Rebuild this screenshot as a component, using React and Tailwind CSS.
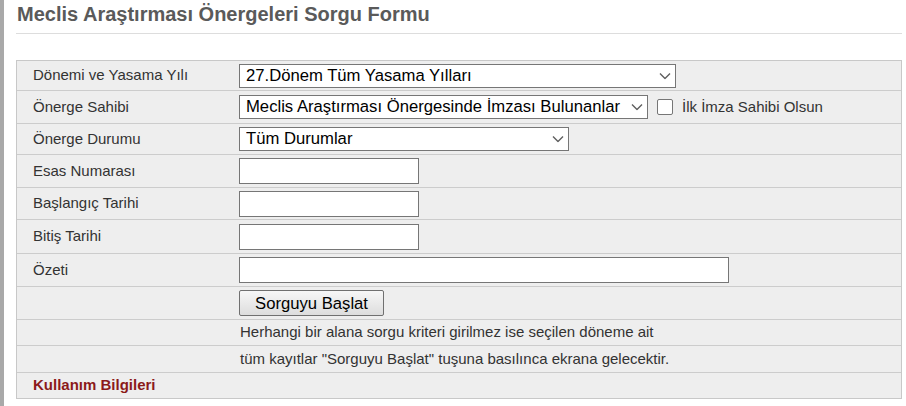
import React from "react";

const Chevron = () => (
  <svg
    className="pointer-events-none absolute right-[5px] top-1/2 -translate-y-1/2"
    width="12"
    height="7"
    viewBox="0 0 12 7"
    fill="none"
  >
    <path d="M1 1l5 5 5-5" stroke="#5f5f5f" strokeWidth="1.4" />
  </svg>
);

const Select = ({ value, width }) => (
  <div className="relative" style={{ width }}>
    <select
      defaultValue={value}
      className="h-[24px] w-full appearance-none border border-[#767676] bg-white pl-[6px] pr-[20px] text-[16.67px] leading-[20px] text-black outline-none"
    >
      <option>{value}</option>
    </select>
    <Chevron />
  </div>
);

const TextInput = ({ width }) => (
  <input
    type="text"
    className="h-[26px] border border-[#767676] bg-white px-[3px] text-[16.67px] outline-none"
    style={{ width }}
  />
);

const Row = ({ label, height, first, children }) => (
  <div
    className={`flex items-center ${first ? "" : "border-t border-[#cccccc]"}`}
    style={{ height }}
  >
    <div className="w-[222px] shrink-0 pl-[16px] text-[15px] text-[#333]">{label}</div>
    <div className="flex items-center">{children}</div>
  </div>
);

export default function App() {
  return (
    <div className="flex min-h-[406px] bg-white font-['Liberation_Sans',Arial,sans-serif]">
      <div className="w-[4px] shrink-0 bg-[#a9a9a9]" />
      <div className="flex-1 pl-[12px] pr-[4px]">
        <h1 className="h-[34px] border-b border-[#dddddd] pl-[1px] pt-[3px] text-[20px] font-bold leading-[23px] text-[#5a5a5a]">
          Meclis Araştırması Önergeleri Sorgu Formu
        </h1>

        <div className="mt-[26px] border border-[#c8c8c8] bg-[#eeeeee]">
          <Row label="Dönemi ve Yasama Yılı" height={29} first>
            <Select value="27.Dönem Tüm Yasama Yılları" width={437} />
          </Row>
          <Row label="Önerge Sahibi" height={33}>
            <Select value="Meclis Araştırması Önergesinde İmzası Bulunanlar" width={409} />
            <span className="ml-[9px] h-[16px] w-[16px] rounded-[2px] border border-[#767676] bg-white" />
            <span className="ml-[9px] text-[15px] text-[#333]">İlk İmza Sahibi Olsun</span>
          </Row>
          <Row label="Önerge Durumu" height={31}>
            <Select value="Tüm Durumlar" width={330} />
          </Row>
          <Row label="Esas Numarası" height={33}>
            <TextInput width={180} />
          </Row>
          <Row label="Başlangıç Tarihi" height={32}>
            <TextInput width={180} />
          </Row>
          <Row label="Bitiş Tarihi" height={34}>
            <TextInput width={180} />
          </Row>
          <Row label="Özeti" height={33}>
            <TextInput width={490} />
          </Row>
          <Row label="" height={33}>
            <button className="h-[26px] w-[145px] rounded-[2px] border border-[#707070] bg-gradient-to-b from-[#f7f7f7] to-[#dddddd] text-[16.67px] text-black">
              Sorguyu Başlat
            </button>
          </Row>
          <Row label="" height={26}>
            <span className="pl-[1px] text-[15px] text-[#333]">
              Herhangi bir alana sorgu kriteri girilmez ise seçilen döneme ait
            </span>
          </Row>
          <Row label="" height={27}>
            <span className="pl-[1px] text-[15px] text-[#333]">
              tüm kayıtlar "Sorguyu Başlat" tuşuna basılınca ekrana gelecektir.
            </span>
          </Row>
          <div className="flex h-[26px] items-center border-t border-[#cccccc] pl-[16px] text-[15px] font-bold text-[#8b1a1a]">
            Kullanım Bilgileri
          </div>
        </div>
      </div>
    </div>
  );
}
